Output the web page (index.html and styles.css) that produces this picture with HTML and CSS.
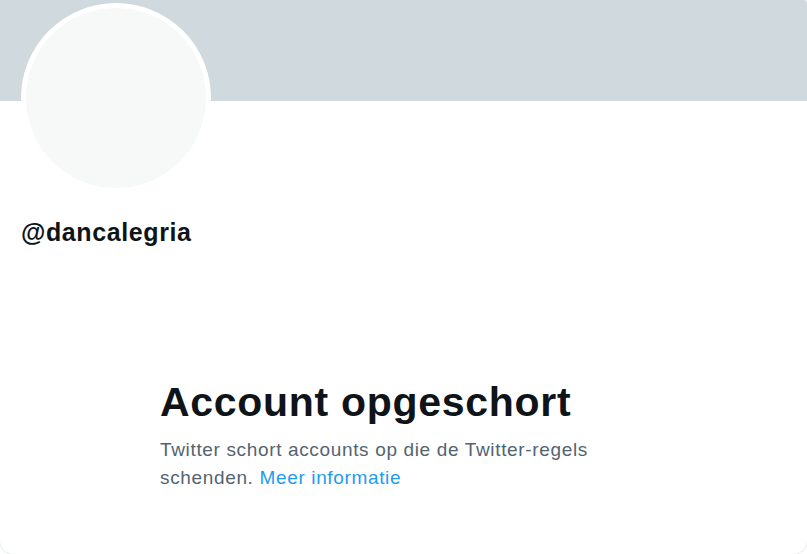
FILE: index.html
```html
<!DOCTYPE html>
<html lang="nl">
<head>
<meta charset="utf-8">
<title>@dancalegria</title>
<link rel="stylesheet" href="styles.css">
</head>
<body>
<main class="card">
  <div class="banner"></div>
  <section class="profile">
    <div class="avatar"></div>
    <h2 class="handle">@dancalegria</h2>
  </section>
  <section class="notice">
    <h1 class="notice-title">Account opgeschort</h1>
    <p class="notice-text">Twitter schort accounts op die de Twitter-regels schenden. <a class="notice-link" href="#">Meer informatie</a></p>
  </section>
</main>
</body>
</html>
```
FILE: styles.css
```css
html, body {
  margin: 0;
  padding: 0;
  background: #ffffff;
}
body {
  font-family: "Liberation Sans", Arial, sans-serif;
  color: #0f1419;
}
.card {
  width: 807px;
  height: 554px;
  background: #ffffff;
  border-radius: 0 4px 14px 14px;
  box-shadow: 0 0 0 1px #e7ecef;
  overflow: hidden;
}
.banner {
  height: 101px;
  background: #cfd9de;
}
.profile {
  padding-left: 21px;
}
.avatar {
  width: 180px;
  height: 180px;
  margin-top: -98px;
  border: 5px solid #ffffff;
  border-radius: 50%;
  background: #f7f9f9;
}
.handle {
  margin: 24px 0 0;
  font-size: 25px;
  line-height: 30px;
  font-weight: 700;
  letter-spacing: 0.6px;
  color: #0f1419;
}
.notice {
  margin-top: 131px;
  padding-left: 160px;
  width: 450px;
}
.notice-title {
  margin: 0;
  font-size: 41px;
  line-height: 48px;
  font-weight: 700;
  letter-spacing: 0.7px;
  color: #0f1419;
}
.notice-text {
  margin: 10px 0 0;
  font-size: 19px;
  line-height: 28px;
  letter-spacing: 0.65px;
  color: #536471;
}
.notice-link {
  color: #1d9bf0;
  text-decoration: none;
}
```
